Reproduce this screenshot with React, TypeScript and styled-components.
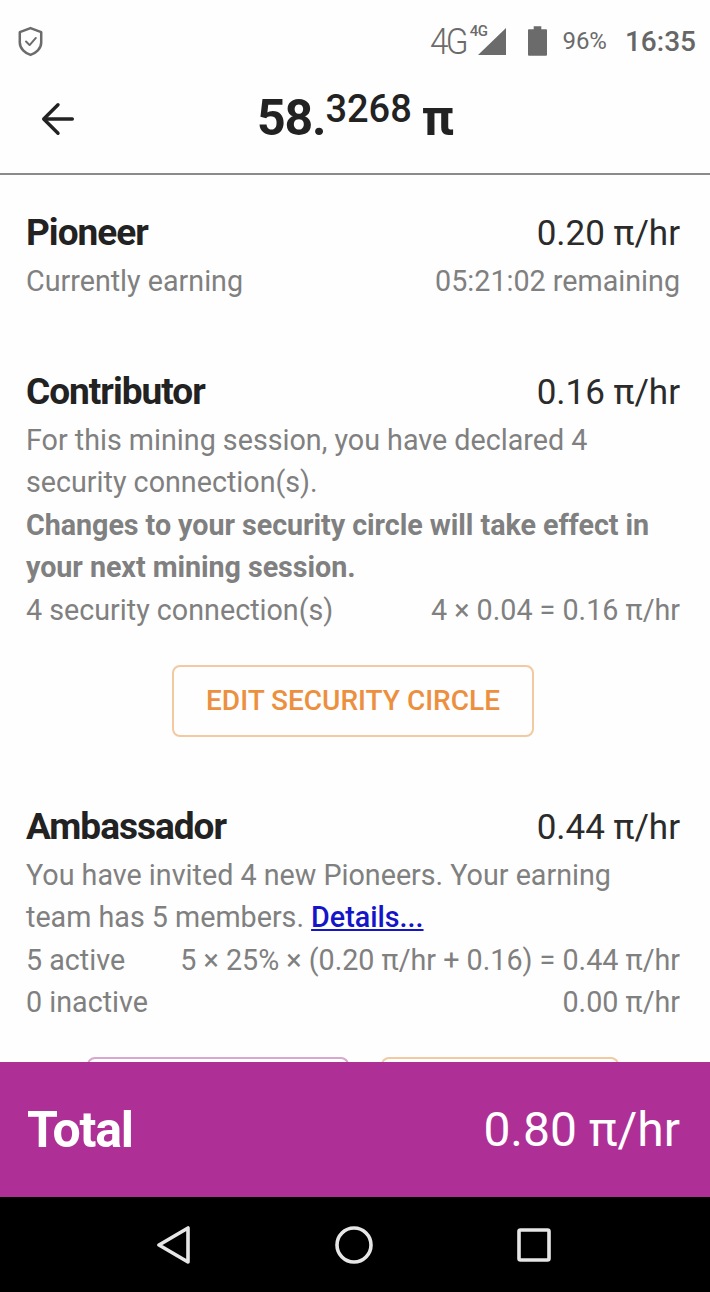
import React from 'react';
import styled, { createGlobalStyle } from 'styled-components';

const GlobalStyle = createGlobalStyle`
  html, body {
    margin: 0;
    padding: 0;
    background: #fff;
  }
  * {
    box-sizing: border-box;
  }
`;

const Screen = styled.div`
  width: 710px;
  height: 1292px;
  display: flex;
  flex-direction: column;
  overflow: hidden;
  background: #fefefe;
  font-family: Roboto, "Liberation Sans", sans-serif;
  color: #808080;
`;

const StatusBar = styled.div`
  height: 82px;
  flex: none;
  display: flex;
  align-items: center;
  justify-content: space-between;
  padding: 0 14px 0 18px;
  color: #6b6b6b;
`;

const StatusRight = styled.div`
  display: flex;
  align-items: center;
`;

const Network = styled.span`
  font-size: 37px;
  letter-spacing: -3px;
  font-weight: 300;
  transform: scaleX(0.9);
  transform-origin: right center;
`;

const NetworkSmall = styled.span`
  font-size: 15px;
  font-weight: 500;
  letter-spacing: -0.5px;
  align-self: flex-start;
  margin: 2px -9px 0 4px;
  position: relative;
  z-index: 1;
  text-shadow: 0 0 2px #fff;
`;

const Percent = styled.span`
  font-size: 24px;
  margin-left: 15px;
`;

const Clock = styled.span`
  font-size: 28px;
  font-weight: 500;
  margin-left: 18px;
  color: #666;
`;

const Header = styled.div`
  height: 93px;
  flex: none;
  display: flex;
  align-items: center;
  position: relative;
  justify-content: center;
  border-bottom: 2px solid #8a8a8a;
  padding-bottom: 20px;
  color: #222;
`;

const BackButton = styled.button`
  position: absolute;
  left: 41px;
  top: 20px;
  width: 34px;
  height: 34px;
  padding: 0;
  border: none;
  background: none;
  color: #222;
`;

const Balance = styled.div`
  font-size: 50px;
  font-weight: 700;
  letter-spacing: -1.2px;
  display: flex;
  align-items: baseline;
`;

const BalanceDecimals = styled.span`
  font-size: 38px;
  font-weight: 500;
  position: relative;
  top: -13px;
  letter-spacing: 0;
`;

const Pi = styled.span`
  margin-left: 10px;
`;

const Content = styled.div`
  flex: 1;
  min-height: 0;
  overflow: hidden;
  padding: 34px 30px 0 26px;
`;

const Section = styled.section<{ $gap: number }>`
  margin-bottom: ${p => p.$gap}px;
`;

const TitleRow = styled.div`
  display: flex;
  justify-content: space-between;
  align-items: baseline;
  height: 48px;
  line-height: 48px;
  margin-bottom: 3px;
`;

const Title = styled.h2`
  margin: 0;
  font-size: 37px;
  font-weight: 700;
  letter-spacing: -1px;
  color: #222;
`;

const Rate = styled.span`
  font-size: 35px;
  color: #2b2b2b;
`;

const Line = styled.div`
  font-size: 28.7px;
  line-height: 42.6px;
`;

const Paragraph = styled(Line)`
  max-width: 640px;
`;

const BoldParagraph = styled(Paragraph)`
  font-weight: 700;
  letter-spacing: -0.05px;
`;

const SplitLine = styled(Line)`
  display: flex;
  justify-content: space-between;
  white-space: nowrap;
`;

const DetailsLink = styled.a`
  color: #1414c8;
  text-decoration: underline;
  font-weight: 500;
`;

const ButtonRow = styled.div`
  display: flex;
  justify-content: center;
  gap: 32px;
  margin-top: 33px;
`;

const OutlineButton = styled.button<{ $color: string; $border: string; $width: number }>`
  width: ${p => p.$width}px;
  height: 72px;
  border: 2px solid ${p => p.$border};
  border-radius: 8px;
  background: transparent;
  color: ${p => p.$color};
  font-family: inherit;
  font-size: 28px;
  font-weight: 500;
  padding: 0;
`;

const TotalBar = styled.div`
  height: 135px;
  flex: none;
  display: flex;
  align-items: center;
  justify-content: space-between;
  padding: 0 30px 0 27px;
  background: #ae2f96;
  color: #fff;
`;

const TotalLabel = styled.span`
  font-size: 50px;
  font-weight: 700;
  letter-spacing: -1.2px;
`;

const TotalRate = styled.span`
  font-size: 48px;
`;

const NavBar = styled.div`
  height: 95px;
  flex: none;
  background: #000;
  display: flex;
  align-items: center;
  justify-content: center;
  gap: 144px;
  padding-right: 2px;
  color: #e6e6e6;
`;

const ShieldIcon = () => (
  <svg width="25" height="31" viewBox="0 0 28 34" fill="none" stroke="currentColor" strokeWidth="2.8" strokeLinejoin="round" strokeLinecap="round">
    <path d="M14 2 L26 6.5 V18 C26 25 20 30 14 32 C8 30 2 25 2 18 V6.5 Z" />
    <path d="M9 17 L13 21 L20 13" strokeWidth="2.2" />
  </svg>
);

const SignalIcon = () => (
  <svg width="28" height="27" viewBox="0 0 28 27" fill="currentColor">
    <path d="M28 0 V27 H0 Z" />
  </svg>
);

const BatteryIcon = () => (
  <svg width="19" height="30" viewBox="0 0 20 31" fill="currentColor" style={{ marginLeft: 22 }}>
    <path d="M6 0 H14 V3 H19 Q20 3 20 4 V30 Q20 31 19 31 H1 Q0 31 0 30 V4 Q0 3 1 3 H6 Z" />
  </svg>
);

const BackArrow = () => (
  <svg width="34" height="34" viewBox="0 0 38 38" fill="none" stroke="currentColor" strokeWidth="3.8" strokeLinecap="round" strokeLinejoin="round">
    <path d="M35 19 H4" />
    <path d="M19 3 L3 19 L19 35" />
  </svg>
);

function App() {
  return (
    <Screen>
      <GlobalStyle />
      <StatusBar>
        <ShieldIcon />
        <StatusRight>
          <Network>4G</Network>
          <NetworkSmall>4G</NetworkSmall>
          <SignalIcon />
          <BatteryIcon />
          <Percent>96%</Percent>
          <Clock>16:35</Clock>
        </StatusRight>
      </StatusBar>
      <Header>
        <BackButton><BackArrow /></BackButton>
        <Balance>
          58.<BalanceDecimals>3268</BalanceDecimals><Pi>π</Pi>
        </Balance>
      </Header>
      <Content>
        <Section $gap={65}>
          <TitleRow><Title>Pioneer</Title><Rate>0.20 π/hr</Rate></TitleRow>
          <SplitLine><span>Currently earning</span><span>05:21:02 remaining</span></SplitLine>
        </Section>
        <Section $gap={66}>
          <TitleRow><Title>Contributor</Title><Rate>0.16 π/hr</Rate></TitleRow>
          <Paragraph>For this mining session, you have declared 4 security connection(s).</Paragraph>
          <BoldParagraph>Changes to your security circle will take effect in your next mining session.</BoldParagraph>
          <SplitLine><span>4 security connection(s)</span><span>4 × 0.04 = 0.16 π/hr</span></SplitLine>
          <ButtonRow>
            <OutlineButton $color="#ec9040" $border="#f2c9a0" $width={362}>EDIT SECURITY CIRCLE</OutlineButton>
          </ButtonRow>
        </Section>
        <Section $gap={0}>
          <TitleRow><Title>Ambassador</Title><Rate>0.44 π/hr</Rate></TitleRow>
          <Paragraph>You have invited 4 new Pioneers. Your earning team has 5 members. <DetailsLink>Details...</DetailsLink></Paragraph>
          <SplitLine><span>5 active</span><span>5 × 25% × (0.20 π/hr + 0.16) = 0.44 π/hr</span></SplitLine>
          <SplitLine><span>0 inactive</span><span>0.00 π/hr</span></SplitLine>
          <ButtonRow>
            <OutlineButton $color="#ae2f96" $border="#d9a6d0" $width={262} />
            <OutlineButton $color="#ec9040" $border="#f2c9a0" $width={238} />
          </ButtonRow>
        </Section>
      </Content>
      <TotalBar>
        <TotalLabel>Total</TotalLabel>
        <TotalRate>0.80 π/hr</TotalRate>
      </TotalBar>
      <NavBar>
        <svg width="34" height="38" viewBox="0 0 34 38" fill="none" stroke="currentColor" strokeWidth="3.6" strokeLinejoin="round">
          <path d="M31 2 V36 L2 19 Z" />
        </svg>
        <svg width="38" height="38" viewBox="0 0 38 38" fill="none" stroke="currentColor" strokeWidth="3.6">
          <circle cx="19" cy="19" r="17" />
        </svg>
        <svg width="34" height="34" viewBox="0 0 34 34" fill="none" stroke="currentColor" strokeWidth="3.6" strokeLinejoin="round">
          <rect x="2" y="2" width="30" height="30" rx="1.5" />
        </svg>
      </NavBar>
    </Screen>
  );
}

export default App;
